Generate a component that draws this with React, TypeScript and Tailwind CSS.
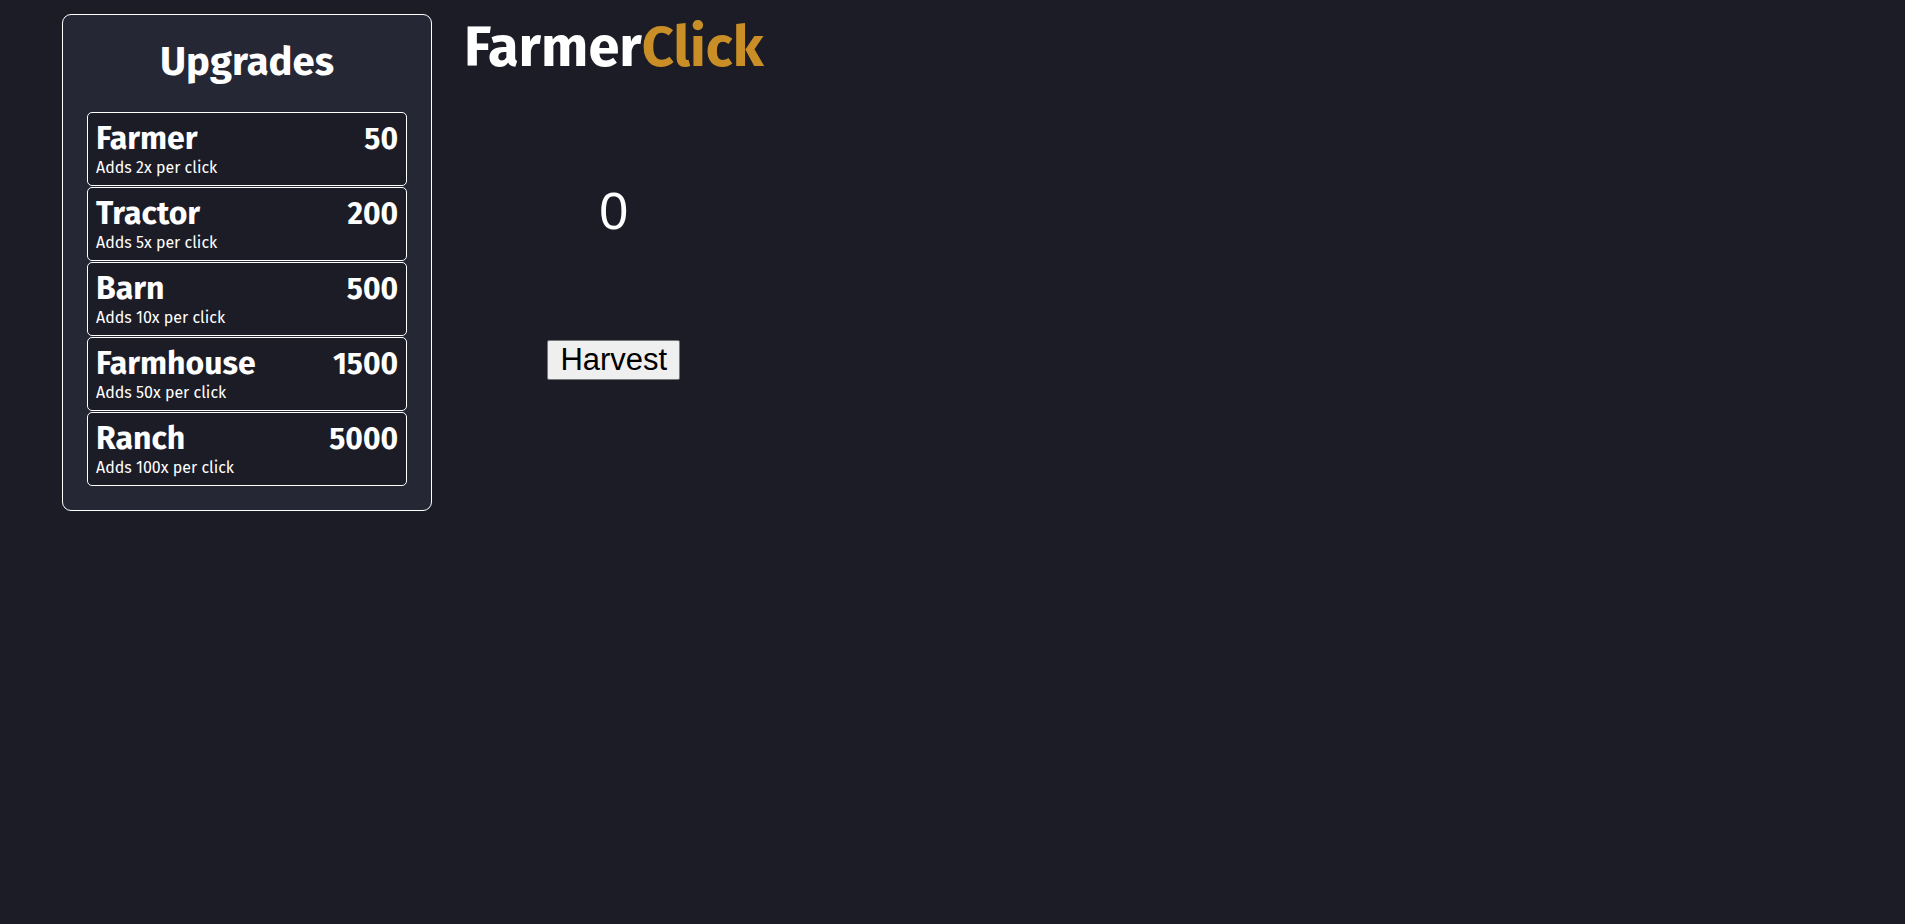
import React from "react";

const upgrades = [
  { name: "Farmer", cost: 50, desc: "Adds 2x per click" },
  { name: "Tractor", cost: 200, desc: "Adds 5x per click" },
  { name: "Barn", cost: 500, desc: "Adds 10x per click" },
  { name: "Farmhouse", cost: 1500, desc: "Adds 50x per click" },
  { name: "Ranch", cost: 5000, desc: "Adds 100x per click" },
];

export default function App() {
  const sans = { fontFamily: "'Fira Sans', Roboto, 'Noto Sans', sans-serif" };
  return (
    <div className="min-h-screen bg-[#1c1c27] text-white flex items-start gap-[32px] pl-[62px] pt-[14px]" style={sans}>
      <aside className="w-[370px] border border-white rounded-[9px] bg-[#252735] px-[24px] pt-[23px] pb-[24px]">
        <h2 className="text-center text-[40px] font-bold leading-[48px] mb-[26px]">Upgrades</h2>
        <div className="flex flex-col gap-[1px]">
          {upgrades.map((u) => (
            <div key={u.name} className="h-[74px] border border-white rounded-[5px] bg-[#1c1c27] px-[8px] pt-[6px]">
              <div className="flex justify-between items-baseline">
                <span className="text-[32px] font-bold leading-[38px]">{u.name}</span>
                <span className="text-[30px] font-bold leading-[38px]">{u.cost}</span>
              </div>
              <div className="text-[16px] leading-[19px]">{u.desc}</div>
            </div>
          ))}
        </div>
      </aside>
      <main className="flex flex-col items-center">
        <h1 className="text-[56px] font-bold leading-[56px] mt-[6px]">
          Farmer<span className="text-[#c98f26]">Click</span>
        </h1>
        <div className="text-[52px] leading-[60px] mt-[105px]" style={{ fontFamily: "'Liberation Sans', Arial, sans-serif" }}>0</div>
        <button
          className="mt-[99px] bg-[#efefef] text-black border border-[#767676] rounded-[2px] px-[12px] text-[31px] leading-[36px] h-[40px]"
          style={{ fontFamily: "'Liberation Sans', Arial, sans-serif" }}
        >
          Harvest
        </button>
      </main>
    </div>
  );
}
